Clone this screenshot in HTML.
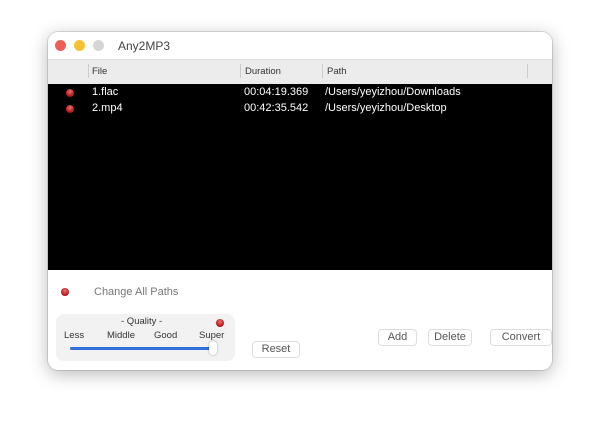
<!DOCTYPE html><html><head><style>
body{margin:0;width:600px;height:433px;background:#fff;font-family:"Liberation Sans",sans-serif;position:relative;overflow:hidden}
.a{position:absolute}
.win{left:48px;top:32px;width:504px;height:338px;border-radius:10px;background:#fff;box-shadow:0 4px 18px rgba(0,0,0,.28),0 0 0 1px rgba(0,0,0,.12);overflow:hidden}
.dot{width:11px;height:11px;border-radius:50%}
.rd{width:8px;height:8px;border-radius:50%;background:radial-gradient(circle at 50% 35%,#f07070,#b01010 70%)}
.t{font-size:11px;white-space:nowrap}
.btn{border:1px solid #ddd;border-radius:4px;background:#fff;font-size:11px;color:#555;text-align:center;line-height:15px}
</style></head><body>
<div class="a win">
<div class="a dot" style="left:7px;top:8px;background:#ed5f56"></div>
<div class="a dot" style="left:26px;top:8px;background:#f4c230"></div>
<div class="a dot" style="left:45px;top:8px;background:#d5d5d5"></div>
<div class="a t" style="left:70px;top:7px;font-size:12px;color:#444">Any2MP3</div>
<div class="a" style="left:0;top:27px;width:504px;height:24px;background:#ececec;border-top:1px solid #ddd"></div>
<div class="a" style="left:40px;top:32px;width:1px;height:14px;background:#ccc"></div>
<div class="a" style="left:192px;top:32px;width:1px;height:14px;background:#ccc"></div>
<div class="a" style="left:274px;top:32px;width:1px;height:14px;background:#ccc"></div>
<div class="a" style="left:479px;top:32px;width:1px;height:14px;background:#ccc"></div>
<div class="a t" style="left:44px;top:34px;font-size:9.5px;color:#333">File</div>
<div class="a t" style="left:197px;top:34px;font-size:9.5px;color:#333">Duration</div>
<div class="a t" style="left:279px;top:34px;font-size:9.5px;color:#333">Path</div>
<div class="a" style="left:0;top:52px;width:504px;height:186px;background:#000"></div>
<div class="a rd" style="left:18px;top:57px"></div>
<div class="a rd" style="left:18px;top:73px"></div>
<div class="a t" style="left:44px;top:54px;color:#fff">1.flac</div>
<div class="a t" style="left:44px;top:70px;color:#fff">2.mp4</div>
<div class="a t" style="left:196px;top:54px;color:#fff">00:04:19.369</div>
<div class="a t" style="left:196px;top:70px;color:#fff">00:42:35.542</div>
<div class="a t" style="left:277px;top:54px;color:#fff">/Users/yeyizhou/Downloads</div>
<div class="a t" style="left:277px;top:70px;color:#fff">/Users/yeyizhou/Desktop</div>
<div class="a rd" style="left:13px;top:256px"></div>
<div class="a t" style="left:46px;top:254px;color:#777">Change All Paths</div>
<div class="a" style="left:8px;top:282px;width:179px;height:47px;border-radius:8px;background:#f2f2f2"></div>
<div class="a t" style="left:73px;top:284px;font-size:9.5px;color:#333">- Quality -</div>
<div class="a rd" style="left:168px;top:287px"></div>
<div class="a t" style="left:16px;top:298px;font-size:9.5px;color:#333">Less</div>
<div class="a t" style="left:59px;top:298px;font-size:9.5px;color:#333">Middle</div>
<div class="a t" style="left:106px;top:298px;font-size:9.5px;color:#333">Good</div>
<div class="a t" style="left:151px;top:298px;font-size:9.5px;color:#333">Super</div>
<div class="a" style="left:22px;top:315px;width:144px;height:3px;border-radius:2px;background:#2f6fd8"></div>
<div class="a" style="left:161px;top:309px;width:8px;height:14px;border-radius:4px;background:#fff;box-shadow:0 0 2px rgba(0,0,0,.35)"></div>
<div class="a btn" style="left:204px;top:309px;width:46px;height:15px">Reset</div>
<div class="a btn" style="left:330px;top:297px;width:37px;height:15px">Add</div>
<div class="a btn" style="left:380px;top:297px;width:42px;height:15px">Delete</div>
<div class="a btn" style="left:442px;top:297px;width:60px;height:15px">Convert</div>
</div>
</body></html>
